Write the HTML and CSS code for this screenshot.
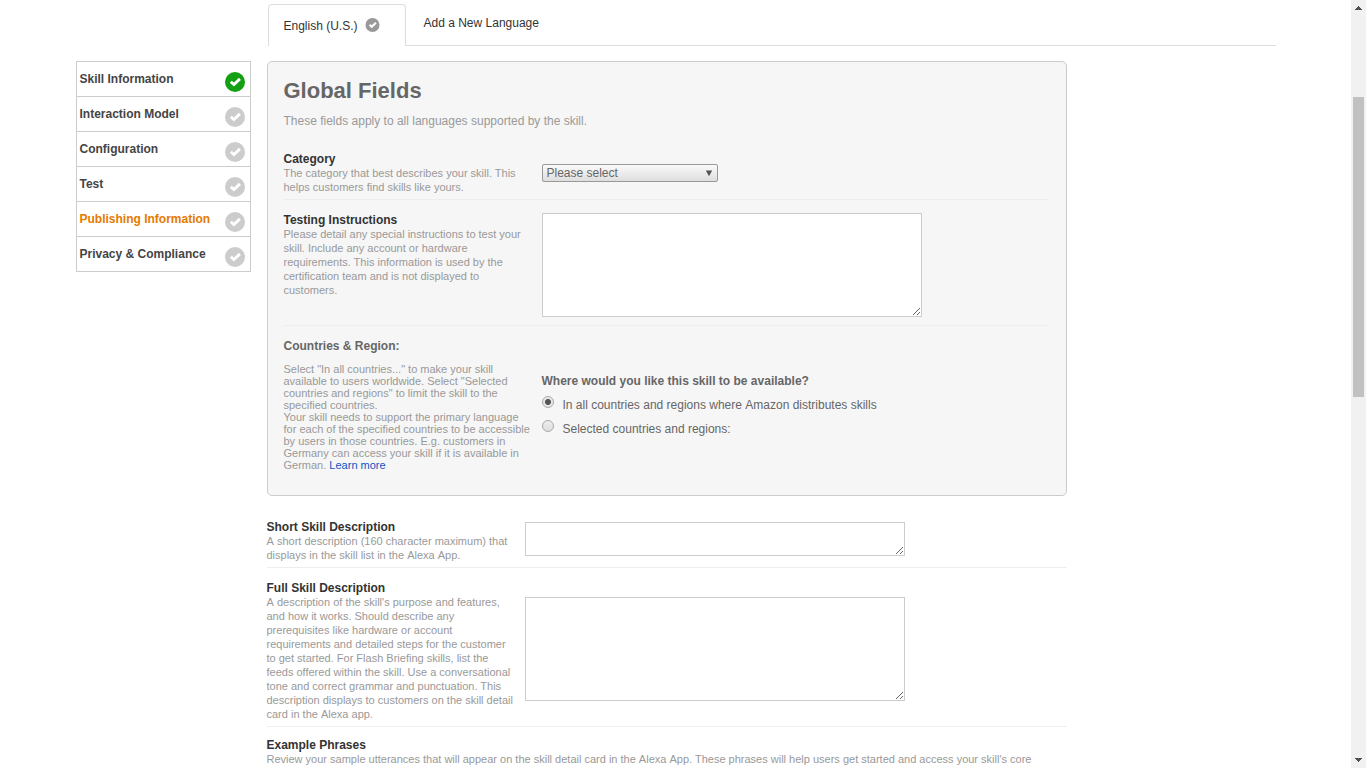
FILE: index.html
```html
<!DOCTYPE html>
<html lang="en">
<head>
<meta charset="utf-8">
<title>Publishing Information</title>
<link rel="stylesheet" href="styles.css">
</head>
<body>
<svg width="0" height="0" class="defs">
  <symbol id="check" viewBox="0 0 20 20"><circle cx="10" cy="10" r="10"/><path d="M5.8 9.7 8.9 12.6 14.9 6.9" fill="none" stroke="#fff" stroke-width="2.9"/></symbol>
</svg>
<div class="window">
  <div class="viewport">
    <div class="container">
      <header class="tabs">
        <div class="tab tab-active"><span>English (U.S.)</span><svg class="tab-icon"><use href="#check"/></svg></div>
        <div class="tab tab-add">Add a New Language</div>
      </header>
      <div class="columns">
        <nav class="steps">
          <a class="step done"><span>Skill Information</span><svg class="step-icon"><use href="#check"/></svg></a>
          <a class="step"><span>Interaction Model</span><svg class="step-icon"><use href="#check"/></svg></a>
          <a class="step"><span>Configuration</span><svg class="step-icon"><use href="#check"/></svg></a>
          <a class="step"><span>Test</span><svg class="step-icon"><use href="#check"/></svg></a>
          <a class="step current"><span>Publishing Information</span><svg class="step-icon"><use href="#check"/></svg></a>
          <a class="step"><span>Privacy &amp; Compliance</span><svg class="step-icon"><use href="#check"/></svg></a>
        </nav>
        <main class="main">
          <section class="panel">
            <h2>Global Fields</h2>
            <p class="intro">These fields apply to all languages supported by the skill.</p>
            <div class="row row-category">
              <div class="info">
                <h3>Category</h3>
                <p>The category that best describes your skill. This<br>helps customers find skills like yours.</p>
              </div>
              <div class="select"><span>Please select</span><svg width="8" height="7" viewBox="0 0 8 7"><path d="M0.8 0.5H7.2L4 6.3z" fill="#555"/></svg></div>
            </div>
            <div class="row row-testing">
              <div class="info">
                <h3>Testing Instructions</h3>
                <p>Please detail any special instructions to test your<br>skill. Include any account or hardware<br>requirements. This information is used by the<br>certification team and is not displayed to<br>customers.</p>
              </div>
              <textarea class="area tall"></textarea>
            </div>
            <div class="row row-countries">
              <div class="info">
                <h3>Countries &amp; Region:</h3>
                <p>Select "In all countries..." to make your skill<br>available to users worldwide. Select "Selected<br>countries and regions" to limit the skill to the<br>specified countries.<br>Your skill needs to support the primary language<br>for each of the specified countries to be accessible<br>by users in those countries. E.g. customers in<br>Germany can access your skill if it is available in<br>German. <a class="link">Learn more</a></p>
              </div>
              <div class="choices">
                <h4>Where would you like this skill to be available?</h4>
                <div class="choice"><i class="radio on"></i><span>In all countries and regions where <span class="cap">Amazon</span> distributes skills</span></div>
                <div class="choice"><i class="radio"></i><span>Selected countries and regions:</span></div>
              </div>
            </div>
          </section>
          <div class="row row-short">
            <div class="info">
              <h3>Short Skill Description</h3>
              <p><span class="lead">A</span> short description (160 character maximum) that<br>displays in the skill list in the <span class="cap">Alexa</span> <span class="cap">App</span>.</p>
            </div>
            <textarea class="area short"></textarea>
          </div>
          <div class="row row-full">
            <div class="info">
              <h3>Full Skill Description</h3>
              <p><span class="lead">A</span> description of the skill's purpose and features,<br>and how it works. Should describe any<br>prerequisites like hardware or account<br>requirements and detailed steps for the customer<br>to get started. For Flash Briefing skills, list the<br>feeds offered within the skill. Use a conversational<br>tone and correct grammar and punctuation. This<br>description displays to customers on the skill detail<br>card in the <span class="cap">Alexa</span> app.</p>
            </div>
            <textarea class="area tall"></textarea>
          </div>
          <div class="row row-examples">
            <div class="info">
              <h3>Example Phrases</h3>
              <p>Review your sample utterances that will appear on the skill detail card in the <span class="cap">Alexa</span> <span class="cap">App</span>. These phrases will help users get started and access your skill's core</p>
            </div>
          </div>
        </main>
      </div>
    </div>
  </div>
  <aside class="scrollbar">
    <svg width="7" height="4" viewBox="0 0 7 4" shape-rendering="crispEdges"><path d="M3 0h1v1h1v1h1v1h1v1H0V3h1V2h1V1h1z" fill="#505050"/></svg>
    <div class="thumb"></div>
    <svg class="down" width="7" height="4" viewBox="0 0 7 4" shape-rendering="crispEdges"><path d="M0 0h7v1H6v1H5v1H4v1H3V3H2V2H1V1H0z" fill="#505050"/></svg>
  </aside>
</div>
</body>
</html>
```
FILE: styles.css
```css
* { box-sizing: border-box; }
body { margin: 0; overflow: hidden; background: #fff; font: 12px/14px "Liberation Sans", Arial, sans-serif; color: #666; }
h2, h3, h4, p { margin: 0; }
.defs { display: block; }
.window { display: flex; height: 768px; overflow: hidden; }
.viewport { flex: 1; overflow: hidden; }
.container { width: 1200px; margin: 0 auto; }

.tabs { display: flex; height: 46px; padding-top: 4px; margin-left: 192px; }
.tab { color: #333; border-bottom: 1px solid #ddd; }
.tab-active { display: flex; width: 138px; padding: 14px 0 0 15px; border: 1px solid #ddd; border-bottom: 0; border-radius: 4px 4px 0 0; }
.tab-icon { width: 15px; height: 14px; margin: -1px 0 0 7.5px; fill: #999; }
.tab-add { flex: 1; padding: 12px 0 0 18px; }

.columns { display: flex; align-items: flex-start; padding-top: 15px; gap: 16px; }
.steps { width: 175px; border: 1px solid #ccc; }
.step { display: flex; justify-content: space-between; height: 35px; padding: 10px 5px 0 3px; border-bottom: 1px solid #ccc; font-weight: bold; color: #444; }
.step:last-child { height: 34px; border-bottom: 0; }
.step-icon { width: 20px; height: 20px; fill: #ccc; }
.done .step-icon { fill: #13a013; }
.step.current { color: #e47a00; }

.main { width: 800px; }
.panel { width: 800px; height: 435px; padding: 16px 17px 0 16px; border: 1px solid #ccc; border-radius: 5px; background: #f6f6f6; }
.panel h2 { font-size: 22px; line-height: 26px; color: #666; }
.intro { margin-top: 10px; color: #999; }
.row { display: flex; border-bottom: 1px solid #eee; }
.info { width: 258px; flex: none; white-space: nowrap; }
.info h3 { font-size: 12px; line-height: 14px; color: #333; }
.info p { font-size: 11px; line-height: 14px; color: #999; }
.cap { display: inline-block; }
.lead { display: inline-block; }
.row-category { height: 48px; margin-top: 24px; }
.select { display: flex; justify-content: space-between; width: 176px; height: 18px; margin-top: 12px; padding: 1px 4px; border: 1px solid #999; border-radius: 2px; background: linear-gradient(#fafafa, #dedede); color: #666; }
.select svg { margin-top: 4px; }
.area { display: block; width: 380px; margin: 0; padding: 2px; border: 1px solid #ccc; border-radius: 0; background: #fff; resize: both; outline: 0; }
.tall { height: 104px; }
.short { height: 34px; margin-top: 2px; }
.row-testing { height: 126px; padding-top: 13px; }
.row-countries { padding-top: 13px; border: 0; }
.row-countries .info h3 { color: #666; }
.row-countries .info p { margin-top: 10px; line-height: 12px; }
.info .link { color: #0a57c2; }
.choices { padding-top: 35px; }
.choices h4 { font-size: 12px; line-height: 14px; }
.choice { display: flex; gap: 9px; height: 24px; padding-top: 10px; }
.radio { width: 12px; height: 12px; margin-top: -2px; border: 1px solid #aaa; border-radius: 50%; background: linear-gradient(#eee, #ddd); }
.radio.on { background: radial-gradient(circle, #555 0 2.6px, #e8e8e8 3.4px); }

.row-short { height: 48px; margin-top: 24px; }
.row-full { height: 159px; padding-top: 13px; }
.row-full .area { margin-top: 16px; }
.row-examples { padding-top: 11px; border: 0; }

.scrollbar { display: flex; flex-direction: column; align-items: center; width: 15px; padding: 6px 0; background: #f1f1f1; }
.thumb { width: 11px; height: 300px; margin-top: 87px; background: #c1c1c1; }
.down { margin-top: auto; }
```
